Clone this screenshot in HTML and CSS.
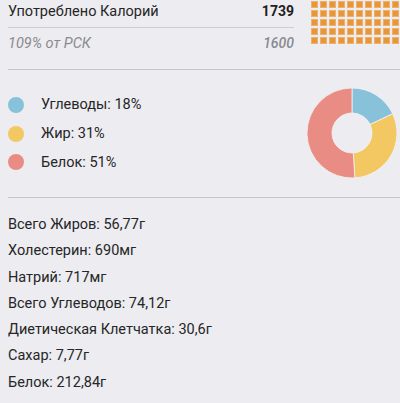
FILE: index.html
```html
<!DOCTYPE html>
<html lang="ru">
<head>
<meta charset="utf-8">
<title>Калории</title>
<link rel="stylesheet" href="styles.css">
</head>
<body>
<section class="summary">
  <div class="summary-text">
    <div class="row row-main"><span>Употреблено Калорий</span><b class="num">1739</b></div>
    <div class="row row-sub"><span>109% от РСК</span><span class="num num-sub">1600</span></div>
  </div>
  <div class="grid">
    <i></i><i></i><i></i><i></i><i></i><i></i><i></i><i></i><i></i><i></i>
    <i></i><i></i><i></i><i></i><i></i><i></i><i></i><i></i><i></i><i></i>
    <i></i><i></i><i></i><i></i><i></i><i></i><i></i><i></i><i></i><i></i>
    <i></i><i></i><i></i><i></i><i></i><i></i><i></i><i></i><i></i><i></i>
    <i></i><i></i><i></i><i></i><i></i><i></i><i></i><i></i><i></i><i></i>
  </div>
</section>
<section class="macros">
  <ul class="legend">
    <li><span class="dot carbs"></span>Углеводы: 18%</li>
    <li><span class="dot fat"></span>Жир: 31%</li>
    <li><span class="dot protein"></span>Белок: 51%</li>
  </ul>
  <svg class="donut" width="90" height="90" viewBox="0 0 90 90">
    <path class="seg-carbs" d="M45 0 A45 45 0 0 1 85.72 25.84 L63.10 36.48 A20 20 0 0 0 45 25 Z"/>
    <path class="seg-fat" d="M85.72 25.84 A45 45 0 0 1 47.83 89.91 L46.26 64.96 A20 20 0 0 0 63.10 36.48 Z"/>
    <path class="seg-protein" d="M47.83 89.91 A45 45 0 1 1 45 0 L45 25 A20 20 0 1 0 46.26 64.96 Z"/>
  </svg>
</section>
<ul class="nutrients">
  <li>Всего Жиров: 56,77г</li>
  <li>Холестерин: 690мг</li>
  <li>Натрий: 717мг</li>
  <li>Всего Углеводов: 74,12г</li>
  <li>Диетическая Клетчатка: 30,6г</li>
  <li>Сахар: 7,77г</li>
  <li>Белок: 212,84г</li>
</ul>
</body>
</html>
```
FILE: styles.css
```css
html, body {
  margin: 0;
  padding: 0;
}
body {
  background: #ececf1;
  font-family: Roboto, "Noto Sans", sans-serif;
  font-size: 14.5px;
  color: #262626;
  width: 400px;
  height: 403px;
  overflow: hidden;
}
.summary {
  display: flex;
  align-items: flex-start;
  gap: 17px;
  height: 69px;
  margin-left: 8px;
  border-bottom: 1px solid #c6c6ca;
}
.summary-text {
  width: 286px;
  flex: none;
}
.row {
  display: flex;
  justify-content: space-between;
  align-items: baseline;
}
.num {
  font-size: 14px;
}
.row-main {
  line-height: 22px;
  padding-bottom: 4px;
  border-bottom: 1px solid #cfcfd3;
}
.row-main b {
  font-weight: 700;
  color: #1e1e1e;
}
.row-sub {
  line-height: 24px;
  padding-top: 3px;
  font-style: italic;
  color: #8a8a8e;
}
.num-sub {
  font-weight: 500;
}
.grid {
  display: grid;
  grid-template-columns: repeat(10, 7px);
  grid-auto-rows: 7px;
  gap: 2px;
  margin-top: 1px;
}
.grid i {
  display: block;
  background: #e8963a;
  box-shadow: inset 0 0 0 1px #efb06c;
}
.macros {
  display: flex;
  align-items: center;
  justify-content: space-between;
  height: 127px;
  margin-left: 8px;
  padding-right: 3px;
  border-bottom: 1px solid #c6c6ca;
}
.legend {
  list-style: none;
  margin: 0;
  padding: 0;
}
.legend li {
  display: flex;
  align-items: center;
  height: 28.7px;
  gap: 17px;
}
.dot {
  width: 16px;
  height: 16px;
  border-radius: 50%;
  display: block;
}
.carbs { background: #88c2da; }
.fat { background: #f3c862; }
.protein { background: #e88c84; }
.donut {
  display: block;
  margin-top: -1px;
}
.donut path {
  stroke: #f4f4f6;
  stroke-width: 0.8;
}
.seg-carbs { fill: #88c2da; }
.seg-fat { fill: #f3c862; }
.seg-protein { fill: #e88c84; }
.nutrients {
  list-style: none;
  margin: 0;
  padding: 14px 0 0 8px;
}
.nutrients li {
  line-height: 26.28px;
}
```
